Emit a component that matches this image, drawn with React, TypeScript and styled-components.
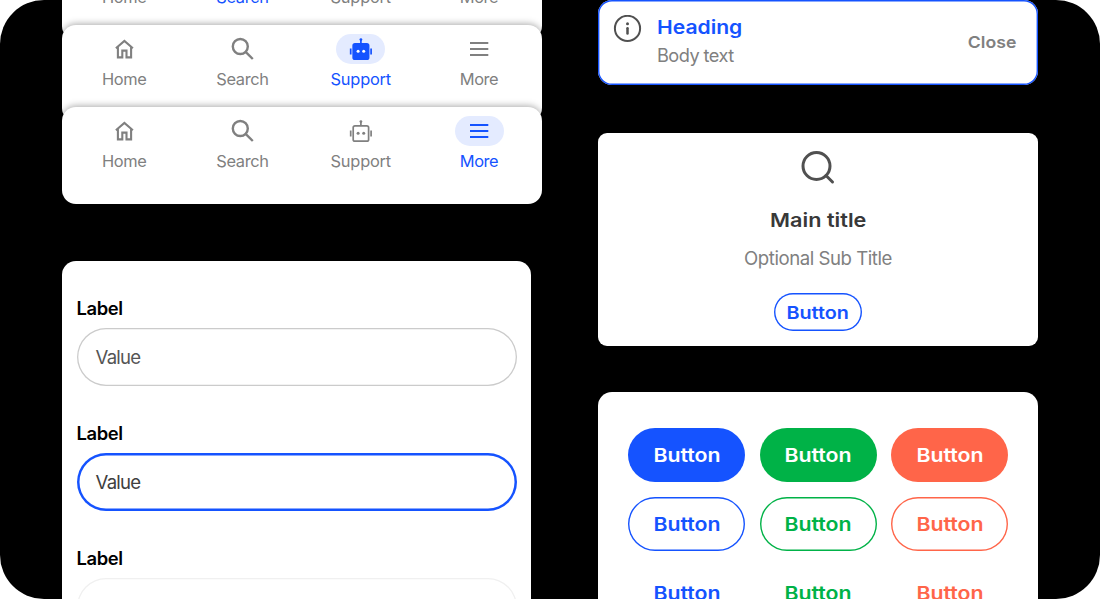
import React from "react";
import styled, { createGlobalStyle, css } from "styled-components";

const blue = "#1553ff";
const green = "#00b247";
const coral = "#ff6549";
const grey = "#808080";

const GlobalStyle = createGlobalStyle`
  * { box-sizing: border-box; }
  html, body { margin: 0; background: #fff; overflow: hidden; }
  body { font-family: Inter, "Liberation Sans", sans-serif; }
`;

const Board = styled.main`
  width: 1100px;
  height: 599px;
  border-radius: 44px;
  background: #000;
  overflow: hidden;
  display: grid;
  grid-template-columns: 480px 440px;
  column-gap: 56px;
  padding-left: 62px;
`;

const Column = styled.div`
  display: flex;
  flex-direction: column;
  align-items: flex-start;
`;

const NavStack = styled.div`
  display: flex;
  flex-direction: column;
  margin-top: -57px;
`;

const NavBar = styled.nav`
  width: 480px;
  height: 97px;
  padding: 9px 3px 0;
  display: grid;
  grid-template-columns: repeat(4, 118.3px);
  align-items: start;
  background: #fff;
  border-radius: 14px;
  box-shadow: 0 -1px 7px rgba(0, 0, 0, 0.34);
  & + & { margin-top: -15px; }
`;

const NavItem = styled.div<{ $active: boolean }>`
  display: flex;
  flex-direction: column;
  align-items: center;
  color: ${(p) => (p.$active ? blue : grey)};
`;

const Pill = styled.span<{ $active: boolean }>`
  width: 49px;
  height: 30px;
  border-radius: 15px;
  background: ${(p) => (p.$active ? "#e4ebff" : "transparent")};
  svg { display: block; }
`;

const NavLabel = styled.span<{ $spacing: number }>`
  margin-top: 5px;
  font-size: 16.4px;
  line-height: 20px;
  letter-spacing: ${(p) => p.$spacing}px;
`;

const FormCard = styled.section`
  width: 469px;
  height: 380px;
  margin-top: 57px;
  padding: 35px 14.5px 0;
  display: flex;
  flex-direction: column;
  gap: 35.2px;
  background: #fff;
  border-radius: 14px;
`;

const Field = styled.label`
  display: flex;
  flex-direction: column;
  gap: 8px;
`;

const FieldLabel = styled.span`
  font-size: 18.4px;
  line-height: 24px;
  font-weight: 600;
  letter-spacing: -0.4px;
  color: #000;
`;

type FieldState = "idle" | "focus" | "disabled";
const Input = styled.div<{ $state: FieldState }>`
  height: 58px;
  display: flex;
  align-items: center;
  padding: 0 0 1px 19px;
  border-radius: 29px;
  font-size: 18.6px;
  letter-spacing: -0.75px;
  ${(p) =>
    p.$state === "focus"
      ? css`box-shadow: inset 0 0 0 2.5px ${blue}; color: #404040;`
      : css`
          box-shadow: inset 0 0 0 1.3px ${p.$state === "idle" ? "#cbcbcb" : "#f0f0f0"};
          color: #555;
        `}
`;

const Alert = styled.section`
  width: 440px;
  height: 85px;
  padding: 15px 22px 0 14px;
  display: flex;
  align-items: flex-start;
  background: #fff;
  box-shadow: inset 0 0 0 1.4px ${blue};
  border-radius: 14px;
`;

const AlertText = styled.div`
  flex: 1;
  margin-left: 15px;
`;

const WideText = styled.span<{ $size: number; $color: string; $weight?: number; $stretch?: number; $origin?: string }>`
  display: inline-block;
  font-size: ${(p) => p.$size}px;
  font-weight: ${(p) => p.$weight ?? 600};
  line-height: 26px;
  color: ${(p) => p.$color};
  transform: scaleX(${(p) => p.$stretch ?? 1.12});
  transform-origin: ${(p) => p.$origin ?? "center"};
`;

const BodyText = styled.div`
  font-size: 18.2px;
  line-height: 26px;
  letter-spacing: -0.55px;
  color: ${grey};
  margin-top: 1px;
`;

const CloseSlot = styled.div`
  margin-top: 14px;
`;

const EmptyCard = styled.section`
  width: 440px;
  height: 213px;
  margin-top: 48px;
  padding-top: 15px;
  display: flex;
  flex-direction: column;
  align-items: center;
  background: #fff;
  border-radius: 9px;
  svg { display: block; margin-bottom: 22px; }
`;

const SubTitle = styled.div`
  margin: 11px 0 22px;
  font-size: 18.6px;
  line-height: 26px;
  letter-spacing: -0.45px;
  color: ${grey};
`;

const SmallButton = styled.button`
  width: 88px;
  height: 38px;
  padding: 1px 0 0;
  border: 0;
  box-shadow: inset 0 0 0 1.4px ${blue};
  border-radius: 19px;
  background: #fff;
  font-family: inherit;
`;

const ButtonCard = styled.section`
  width: 440px;
  height: 250px;
  margin-top: 46px;
  padding: 36px 30px 0;
  display: grid;
  grid-template-columns: repeat(3, 117px);
  grid-auto-rows: 54px;
  gap: 15px 14.5px;
  align-content: start;
  background: #fff;
  border-radius: 14px;
`;

type Kind = "solid" | "outline" | "text";
const Button = styled.button<{ $kind: Kind; $tone: string }>`
  padding: 2px 0 0;
  font-family: inherit;
  border-radius: 27px;
  border: 0;
  box-shadow: ${(p) => (p.$kind === "outline" ? `inset 0 0 0 1.4px ${p.$tone}` : "none")};
  background: ${(p) => (p.$kind === "solid" ? p.$tone : "transparent")};
`;

const frame = { width: 49, height: 30, viewBox: "0 0 49 30", fill: "none", stroke: "currentColor" };

const HomeIcon = () => (
  <svg {...frame} strokeWidth="2.1">
    <path d="M15.9 14.3 24.4 7l8.5 7.3M17.9 13v10.4h4.4v-6.8h4.2v6.8h4.6V13" />
  </svg>
);

const SearchIcon = () => (
  <svg {...frame} strokeWidth="2.4">
    <circle cx="22.3" cy="12.5" r="7.5" />
    <path d="m27.6 17.8 7.2 7.2" />
  </svg>
);

const BotIcon = ({ solid }: { solid: boolean }) => (
  <svg {...frame} strokeWidth="1.7">
    <rect x="17.2" y="9.8" width="15.4" height="15.4" rx="1.8" fill={solid ? "currentColor" : "none"} />
    <path d="M14.7 14.4v6M35.1 14.4v6M24.9 6v4" />
    <circle cx="24.9" cy="5.6" r="1.4" fill="currentColor" stroke="none" />
    <g fill={solid ? "#fff" : "currentColor"} stroke="none">
      <circle cx="22.1" cy="17.3" r="1.5" />
      <circle cx="27.7" cy="17.3" r="1.5" />
    </g>
  </svg>
);

const MoreIcon = () => (
  <svg {...frame} strokeWidth="2">
    <path d="M15 9h18.3M15 15h18.3M15 21h18.3" />
  </svg>
);

const Nav = ({ active }: { active: string }) => {
  const items = [
    { name: "Home", icon: <HomeIcon />, spacing: -0.35 },
    { name: "Search", icon: <SearchIcon />, spacing: -0.35 },
    { name: "Support", icon: <BotIcon solid={active === "Support"} />, spacing: -0.2 },
    { name: "More", icon: <MoreIcon />, spacing: -0.4 },
  ];
  return (
    <NavBar>
      {items.map((item) => (
        <NavItem key={item.name} $active={item.name === active}>
          <Pill $active={item.name === active}>{item.icon}</Pill>
          <NavLabel $spacing={item.spacing}>{item.name}</NavLabel>
        </NavItem>
      ))}
    </NavBar>
  );
};

const fields: { state: FieldState; value: string }[] = [
  { state: "idle", value: "Value" },
  { state: "focus", value: "Value" },
  { state: "disabled", value: "" },
];

const kinds: Kind[] = ["solid", "outline", "text"];
const tones = [blue, green, coral];

export default function App() {
  return (
    <>
      <GlobalStyle />
      <Board>
        <Column>
          <NavStack>
            <Nav active="Search" />
            <Nav active="Support" />
            <Nav active="More" />
          </NavStack>
          <FormCard>
            {fields.map((f) => (
              <Field key={f.state}>
                <FieldLabel>Label</FieldLabel>
                <Input $state={f.state}>{f.value}</Input>
              </Field>
            ))}
          </FormCard>
        </Column>
        <Column>
          <Alert>
            <svg width="30" height="30" viewBox="0 0 30 30" fill="none" stroke="#505050" strokeWidth="2">
              <circle cx="15.5" cy="13.4" r="12.6" />
              <path d="M15.5 13.2v5.4" strokeWidth="2.5" strokeLinecap="round" />
              <circle cx="15.5" cy="8.7" r="1.5" fill="#505050" stroke="none" />
            </svg>
            <AlertText>
              <WideText $size={19} $color={blue} $stretch={1.11} $origin="left">Heading</WideText>
              <BodyText>Body text</BodyText>
            </AlertText>
            <CloseSlot>
              <WideText $size={16.5} $color={grey} $stretch={1.07} $origin="right">Close</WideText>
            </CloseSlot>
          </Alert>
          <EmptyCard>
            <svg width="38" height="38" viewBox="0 0 38 38" fill="none" stroke="#505050" strokeWidth="3">
              <circle cx="17.5" cy="18" r="13.5" />
              <path d="m27 27.5 6.5 6.5" strokeLinecap="round" />
            </svg>
            <WideText $size={19} $color="#383838" $stretch={1.14}>Main title</WideText>
            <SubTitle>Optional Sub Title</SubTitle>
            <SmallButton>
              <WideText $size={17.5} $color={blue} $stretch={1.13}>Button</WideText>
            </SmallButton>
          </EmptyCard>
          <ButtonCard>
            {kinds.map((kind) =>
              tones.map((tone) => (
                <Button key={kind + tone} $kind={kind} $tone={tone}>
                  <WideText $size={19} $color={kind === "solid" ? "#fff" : tone}>Button</WideText>
                </Button>
              ))
            )}
          </ButtonCard>
        </Column>
      </Board>
    </>
  );
}
